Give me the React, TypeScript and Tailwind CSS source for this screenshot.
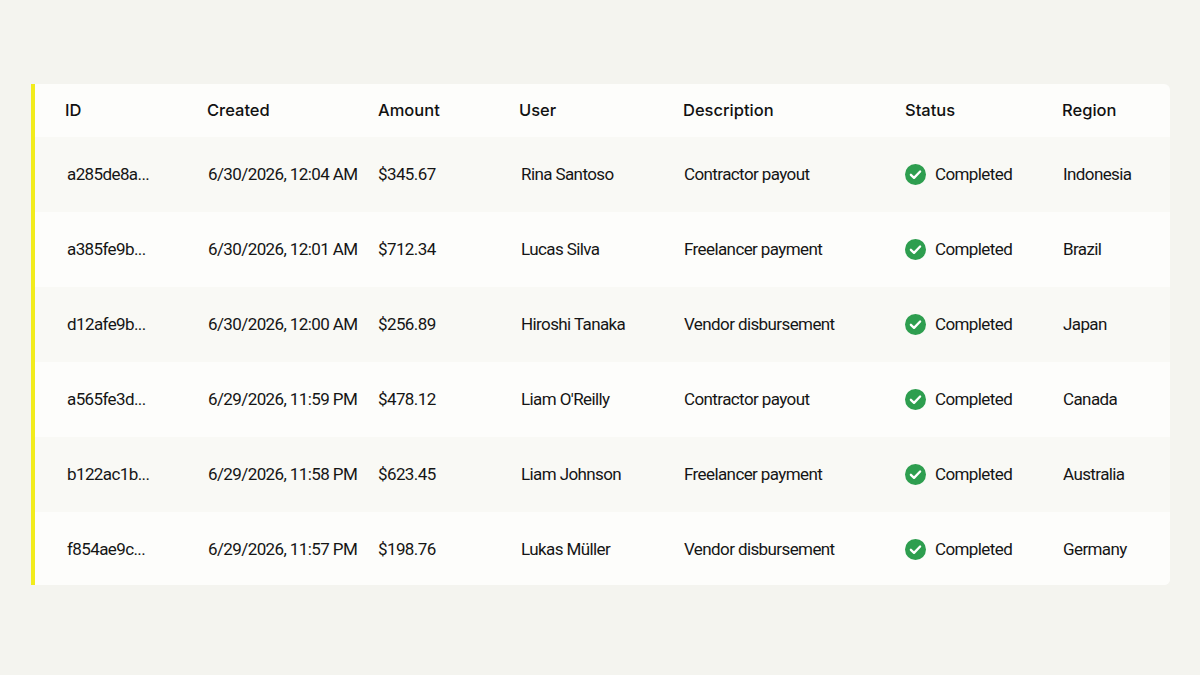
import React from "react";

const rows = [
  ["a285de8a...", "6/30/2026, 12:04 AM", "$345.67", "Rina Santoso", "Contractor payout", "Indonesia"],
  ["a385fe9b...", "6/30/2026, 12:01 AM", "$712.34", "Lucas Silva", "Freelancer payment", "Brazil"],
  ["d12afe9b...", "6/30/2026, 12:00 AM", "$256.89", "Hiroshi Tanaka", "Vendor disbursement", "Japan"],
  ["a565fe3d...", "6/29/2026, 11:59 PM", "$478.12", "Liam O'Reilly", "Contractor payout", "Canada"],
  ["b122ac1b...", "6/29/2026, 11:58 PM", "$623.45", "Liam Johnson", "Freelancer payment", "Australia"],
  ["f854ae9c...", "6/29/2026, 11:57 PM", "$198.76", "Lukas Müller", "Vendor disbursement", "Germany"],
];

const cols = "grid grid-cols-[142px_171px_141px_164px_222px_157px_1fr] pl-[30px]";

function Check() {
  return (
    <svg width="21" height="21" viewBox="0 0 20 20">
      <circle cx="10" cy="10" r="10" fill="#2e9e4f" />
      <path d="M5.6 10.3l3 2.9 5.8-6" stroke="#fff" strokeWidth="2.2" fill="none" strokeLinecap="round" strokeLinejoin="round" />
    </svg>
  );
}

export default function App() {
  return (
    <div className="w-[1200px] h-[675px] bg-[#f4f4ef] pt-[84px] pl-[31px]">
      <div className="w-[1139px] h-[501px] bg-[#fdfdfb] border-l-4 border-[#f2ec1c] rounded-r-md overflow-hidden">
        <div className={`${cols} h-[53px] items-center text-[16.5px] font-medium text-[#111]`} style={{ fontFamily: "Inter, sans-serif" }}>
          <div>ID</div><div>Created</div><div>Amount</div><div>User</div><div>Description</div><div>Status</div><div>Region</div>
        </div>
        {rows.map((r, i) => (
          <div key={i} className={`${cols} h-[75px] items-center text-[17px] text-[#151515] ${i % 2 === 0 ? "bg-[#f9f9f5]" : "bg-[#fdfdfb]"}`} style={{ fontFamily: "Roboto, sans-serif", letterSpacing: "-0.6px" }}>
            <div className="pl-[2px]">{r[0]}</div>
            <div className="pl-[1px]">{r[1]}</div>
            <div>{r[2]}</div>
            <div className="pl-[2px]">{r[3]}</div>
            <div className="pl-[1px]">{r[4]}</div>
            <div className="flex items-center gap-[9px]"><Check /><span>Completed</span></div>
            <div className="pl-[1px]">{r[5]}</div>
          </div>
        ))}
      </div>
    </div>
  );
}
